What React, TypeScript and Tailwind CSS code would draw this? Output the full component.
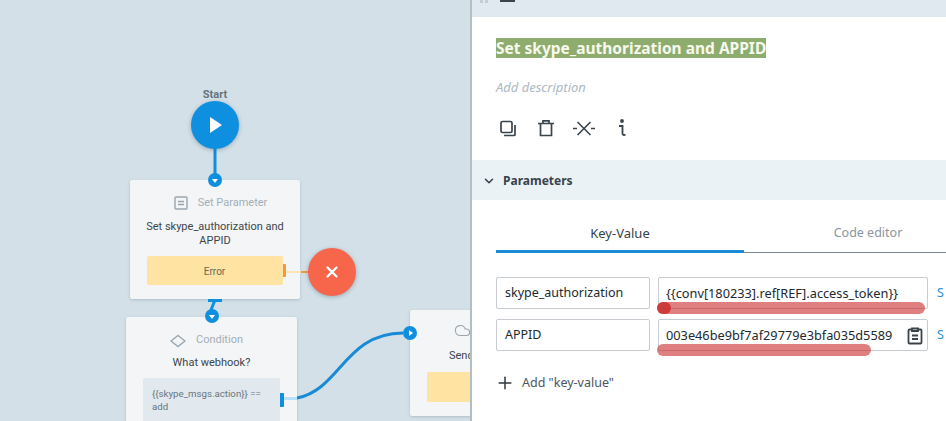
import React from "react";
import { X, Plus, ChevronDown, Cloud } from "lucide-react";

const font = "font-['Noto_Sans','Open_Sans',sans-serif]";

const Dot = ({ className, right }: { className: string; right?: boolean }) => (
  <div className={`absolute flex h-[14px] w-[14px] items-center justify-center rounded-full bg-[#0f8fdf] ${className}`}>
    {right ? (
      <div className="ml-px h-0 w-0 border-y-[3px] border-l-[4px] border-y-transparent border-l-white" />
    ) : (
      <div className="mt-px h-0 w-0 border-x-[3px] border-t-[4px] border-x-transparent border-t-white" />
    )}
  </div>
);

const Card = ({ className, children }: { className: string; children: React.ReactNode }) => (
  <div className={`absolute flex flex-col items-center rounded-[2px] bg-[#f3f5f7] font-['Roboto',sans-serif] shadow-[0_1px_3px_rgba(90,110,125,0.3)] ${className}`}>
    {children}
  </div>
);

const Canvas = () => (
  <div className="relative h-full w-[470px] shrink-0 overflow-hidden bg-[#d3e0e7]">
    <svg className="absolute left-0 top-0" width="470" height="421" fill="none">
      <path d="M215 145V180" stroke="#0f8fdf" strokeWidth="3" />
      <path d="M301 272H308" stroke="#f4983a" strokeWidth="2" />
      <path d="M215 300L211 310" stroke="#0f8fdf" strokeWidth="3" />
      <path d="M297 398C340 390 345 333 403 333" stroke="#1a8ad6" strokeWidth="3" />
    </svg>

    <div className="absolute left-[195px] top-[88px] w-10 text-center font-['Roboto',sans-serif] text-[11px] font-bold leading-[14px] text-[#66747e]">Start</div>
    <div className="absolute left-[191px] top-[101px] flex h-12 w-12 items-center justify-center rounded-full bg-[#0f8fdf] shadow-[0_1px_4px_rgba(60,90,110,0.4)]">
      <svg width="12" height="16" viewBox="0 0 12 16" className="ml-0.5" fill="#fff">
        <path d="M0 0L12 8L0 16Z" />
      </svg>
    </div>

    <Card className="left-[130px] top-[180px] h-[119px] w-[170px] pt-[13px]">
      <div className="flex h-5 items-center gap-[10px] pl-[11px] text-[11px] text-[#a3afb7]">
        <svg width="14" height="14" viewBox="0 0 14 14" fill="none" stroke="#9aa6ae" strokeWidth="1.4">
          <rect x="1" y="1" width="12" height="12" rx="1" />
          <path d="M4 5.5H10M4 8.5H10" />
        </svg>
        Set Parameter
      </div>
      <div className="mt-[7px] w-[150px] text-center text-[11px] leading-[14px] text-[#3c464d]">
        Set skype_authorization and APPID
      </div>
      <div className="mr-px mt-[8px] flex h-[29px] w-[136px] items-center justify-center rounded-[2px] bg-[#fee3a2] pt-px text-[10px] text-[#6d6653]">
        Error
      </div>
    </Card>
    <div className="absolute left-[286px] top-[271px] h-[2px] w-[22px] bg-[#fde2b4]" />
    <div className="absolute left-[301px] top-[271px] h-[2px] w-[7px] bg-[#f4983a]" />
    <div className="absolute left-[283px] top-[264px] h-[13px] w-[3px] rounded-r-[1px] bg-[#f4983a]" />
    <div className="absolute left-[208px] top-[299px] h-[3px] w-[14px] bg-[#0f8fdf]" />
    <Dot className="left-[208px] top-[173px]" />
    <div className="absolute left-[308px] top-[248px] flex h-12 w-12 items-center justify-center rounded-full bg-[#f7654b] shadow-[0_1px_4px_rgba(60,90,110,0.4)]">
      <X size={18} className="text-white" strokeWidth={3.2} />
    </div>

    <Card className="left-[126px] top-[317px] h-[120px] w-[171px] pt-[14px]">
      <div className="flex h-5 items-center gap-[10px] pr-[10px] text-[11px] text-[#a3afb7]">
        <svg width="16" height="14" viewBox="0 0 16 14" fill="none" stroke="#9aa6ae" strokeWidth="1.4">
          <path d="M8 1.5L15 7L8 12.5L1 7Z" />
        </svg>
        Condition
      </div>
      <div className="mt-[6px] text-[11px] leading-[14px] text-[#3c464d]">What webhook?</div>
      <div className="mt-[8px] h-[60px] w-[137px] rounded-[2px] bg-[#e1e9ee] px-[9px] py-[9px] text-[9.7px] leading-[13px] text-[#66747e]">
        {"{{skype_msgs.action}} =="}
        <br />
        add
      </div>
    </Card>
    <div className="absolute left-[284px] top-[397px] h-[3px] w-[13px] bg-[#b9e0f6]" />
    <div className="absolute left-[280px] top-[393px] h-[14px] w-[4px] rounded-r-[1px] bg-[#0f8fdf]" />
    <Dot className="left-[205px] top-[309px]" />

    <Card className="left-[410px] top-[310px] h-[106px] w-[170px] pt-[10px]">
      <div className="flex h-5 w-full items-center pl-[44px]">
        <Cloud size={17} className="text-[#9aa6ae]" strokeWidth={1.5} />
      </div>
      <div className="mt-[9px] w-full pl-[39px] text-[11px] leading-[14px] text-[#3c464d]">Send</div>
      <div className="ml-[17px] mt-[9px] h-[30px] w-[137px] self-start rounded-[2px] bg-[#fee3a2]" />
    </Card>
    <Dot className="left-[403px] top-[326px]" right />
  </div>
);

const TitleIcons = () => (
  <div className="ml-[4px] mt-[22px] flex h-[18px] items-center text-[#3a444b]">
    <svg width="16" height="17" viewBox="0 0 16 17" fill="none" stroke="currentColor" strokeWidth="1.7">
      <rect x="1" y="1.5" width="11" height="11" rx="1.5" />
      <path d="M15 5V14.5A1 1 0 0 1 14 15.5H4" />
    </svg>
    <svg width="16" height="17" viewBox="0 0 16 17" fill="none" stroke="currentColor" strokeWidth="1.7" className="ml-[22px]">
      <path d="M0 3.5H16M5 3.5V0.8H11V3.5M2.5 3.5V15.5H13.5V3.5" />
    </svg>
    <svg width="22" height="17" viewBox="0 0 22 17" fill="none" stroke="currentColor" strokeWidth="1.6" className="ml-[19px]">
      <path d="M0 8.5H4M18 8.5H22M4.5 2L17.5 15M17.5 2L4.5 15" />
    </svg>
    <svg width="10" height="18" viewBox="0 0 10 18" fill="none" stroke="currentColor" strokeWidth="1.8" className="ml-[22px]">
      <circle cx="5" cy="2" r="1" fill="currentColor" />
      <path d="M2 7H5.5V14.5C5.5 16 7 16.5 8.5 15.5" />
    </svg>
  </div>
);

const Row = ({ name, value, icon }: { name: string; value: string; icon?: boolean }) => (
  <div className="flex h-[32px] items-center">
    <div className="flex h-[32px] w-[154px] shrink-0 items-center rounded-[2px] border border-[#c6ccd1] pl-[8px] pt-px text-[12.5px] text-[#20292f]">
      {name}
    </div>
    <div className="ml-[8px] flex h-[32px] w-[270px] shrink-0 items-center justify-between rounded-[2px] border border-[#c6ccd1] pl-[7px] pr-[4px] pt-px text-[12.75px] text-[#20292f]">
      <span className="whitespace-nowrap">{value}</span>
      {icon && (
        <svg width="16" height="18" viewBox="0 0 16 18" fill="none" stroke="#3a444b" strokeWidth="1.8">
          <path d="M5 2.5H2.5A1 1 0 0 0 1.5 3.5V15.5A1 1 0 0 0 2.5 16.5H13.5A1 1 0 0 0 14.5 15.5V3.5A1 1 0 0 0 13.5 2.5H11" />
          <path d="M5 1.5H11V4H5ZM5 8.5H11M5 12H11" />
        </svg>
      )}
    </div>
    <span className="ml-[9px] text-[12.5px] text-[#2a90d6]">S</span>
  </div>
);

const Panel = () => (
  <div className="relative flex h-full min-w-0 flex-1 flex-col overflow-hidden border-l-2 border-[#b0bec6] bg-white">
    <div className="flex h-[17px] shrink-0 items-start bg-[#e0e9ef]">
      <div className="ml-[8px] flex gap-[2px]">
        <div className="h-[3px] w-[3px] bg-[#c3ced5]" />
        <div className="h-[3px] w-[3px] bg-[#c3ced5]" />
      </div>
      <div className="ml-[12px] h-[2px] w-[15px] bg-[#3a444b]" />
    </div>
    <div className="flex h-[143px] shrink-0 flex-col pl-[24px] pt-[21px]">
      <div className="flex">
        <span className="bg-[#8fac6f] text-[15.5px] font-bold leading-[20px] text-[#f7f9ec]">Set skype_authorization and APPID</span>
      </div>
      <div className="mt-[19px] text-[13px] italic leading-[20px] text-[#adb8bf]">Add description</div>
      <TitleIcons />
    </div>
    <div className="flex h-[40px] shrink-0 items-center bg-[#ebf2f6] pl-[10px] pt-px text-[12px] font-bold text-[#38434a]">
      <ChevronDown size={14} strokeWidth={2.6} />
      <span className="ml-[7px]">Parameters</span>
    </div>
    <div className="pl-[24px] pt-[21px]">
      <div className="flex h-[32px] w-[500px] border-b border-[#7c8890] text-[13px]">
        <div className="h-[32px] w-[248px] border-b-[3px] border-[#1b8ad7] text-center leading-[24px] text-[#38434a]">Key-Value</div>
        <div className="w-[248px] text-center text-[12.5px] leading-[24px] text-[#8a959c]">Code editor</div>
      </div>
      <div className="mt-[24px] flex flex-col gap-[10px]">
        <Row name="skype_authorization" value="{{conv[180233].ref[REF].access_token}}" />
        <Row name="APPID" value="003e46be9bf7af29779e3bfa035d5589" icon />
      </div>
      <div className="mt-[22px] flex items-center text-[12.5px] text-[#4b565d]">
        <Plus size={20} strokeWidth={1.8} className="-ml-[1px] text-[#2e383f]" />
        <span className="ml-[7px]">Add "key-value"</span>
      </div>
    </div>
    {/* red marker scribbles on top of the screenshot */}
    <div className="absolute left-[185px] top-[302px] h-[12px] w-[268px] rounded-full bg-[#c92a2a]/60" />
    <div className="absolute left-[185px] top-[302px] h-[12px] w-[14px] rounded-full bg-[#c92a2a]/80" />
    <div className="absolute left-[185px] top-[344px] h-[12px] w-[214px] rounded-full bg-[#c92a2a]/60" />
  </div>
);

const App = () => (
  <div className={`flex h-[421px] w-[946px] overflow-hidden ${font}`}>
    <Canvas />
    <Panel />
  </div>
);

export default App;
